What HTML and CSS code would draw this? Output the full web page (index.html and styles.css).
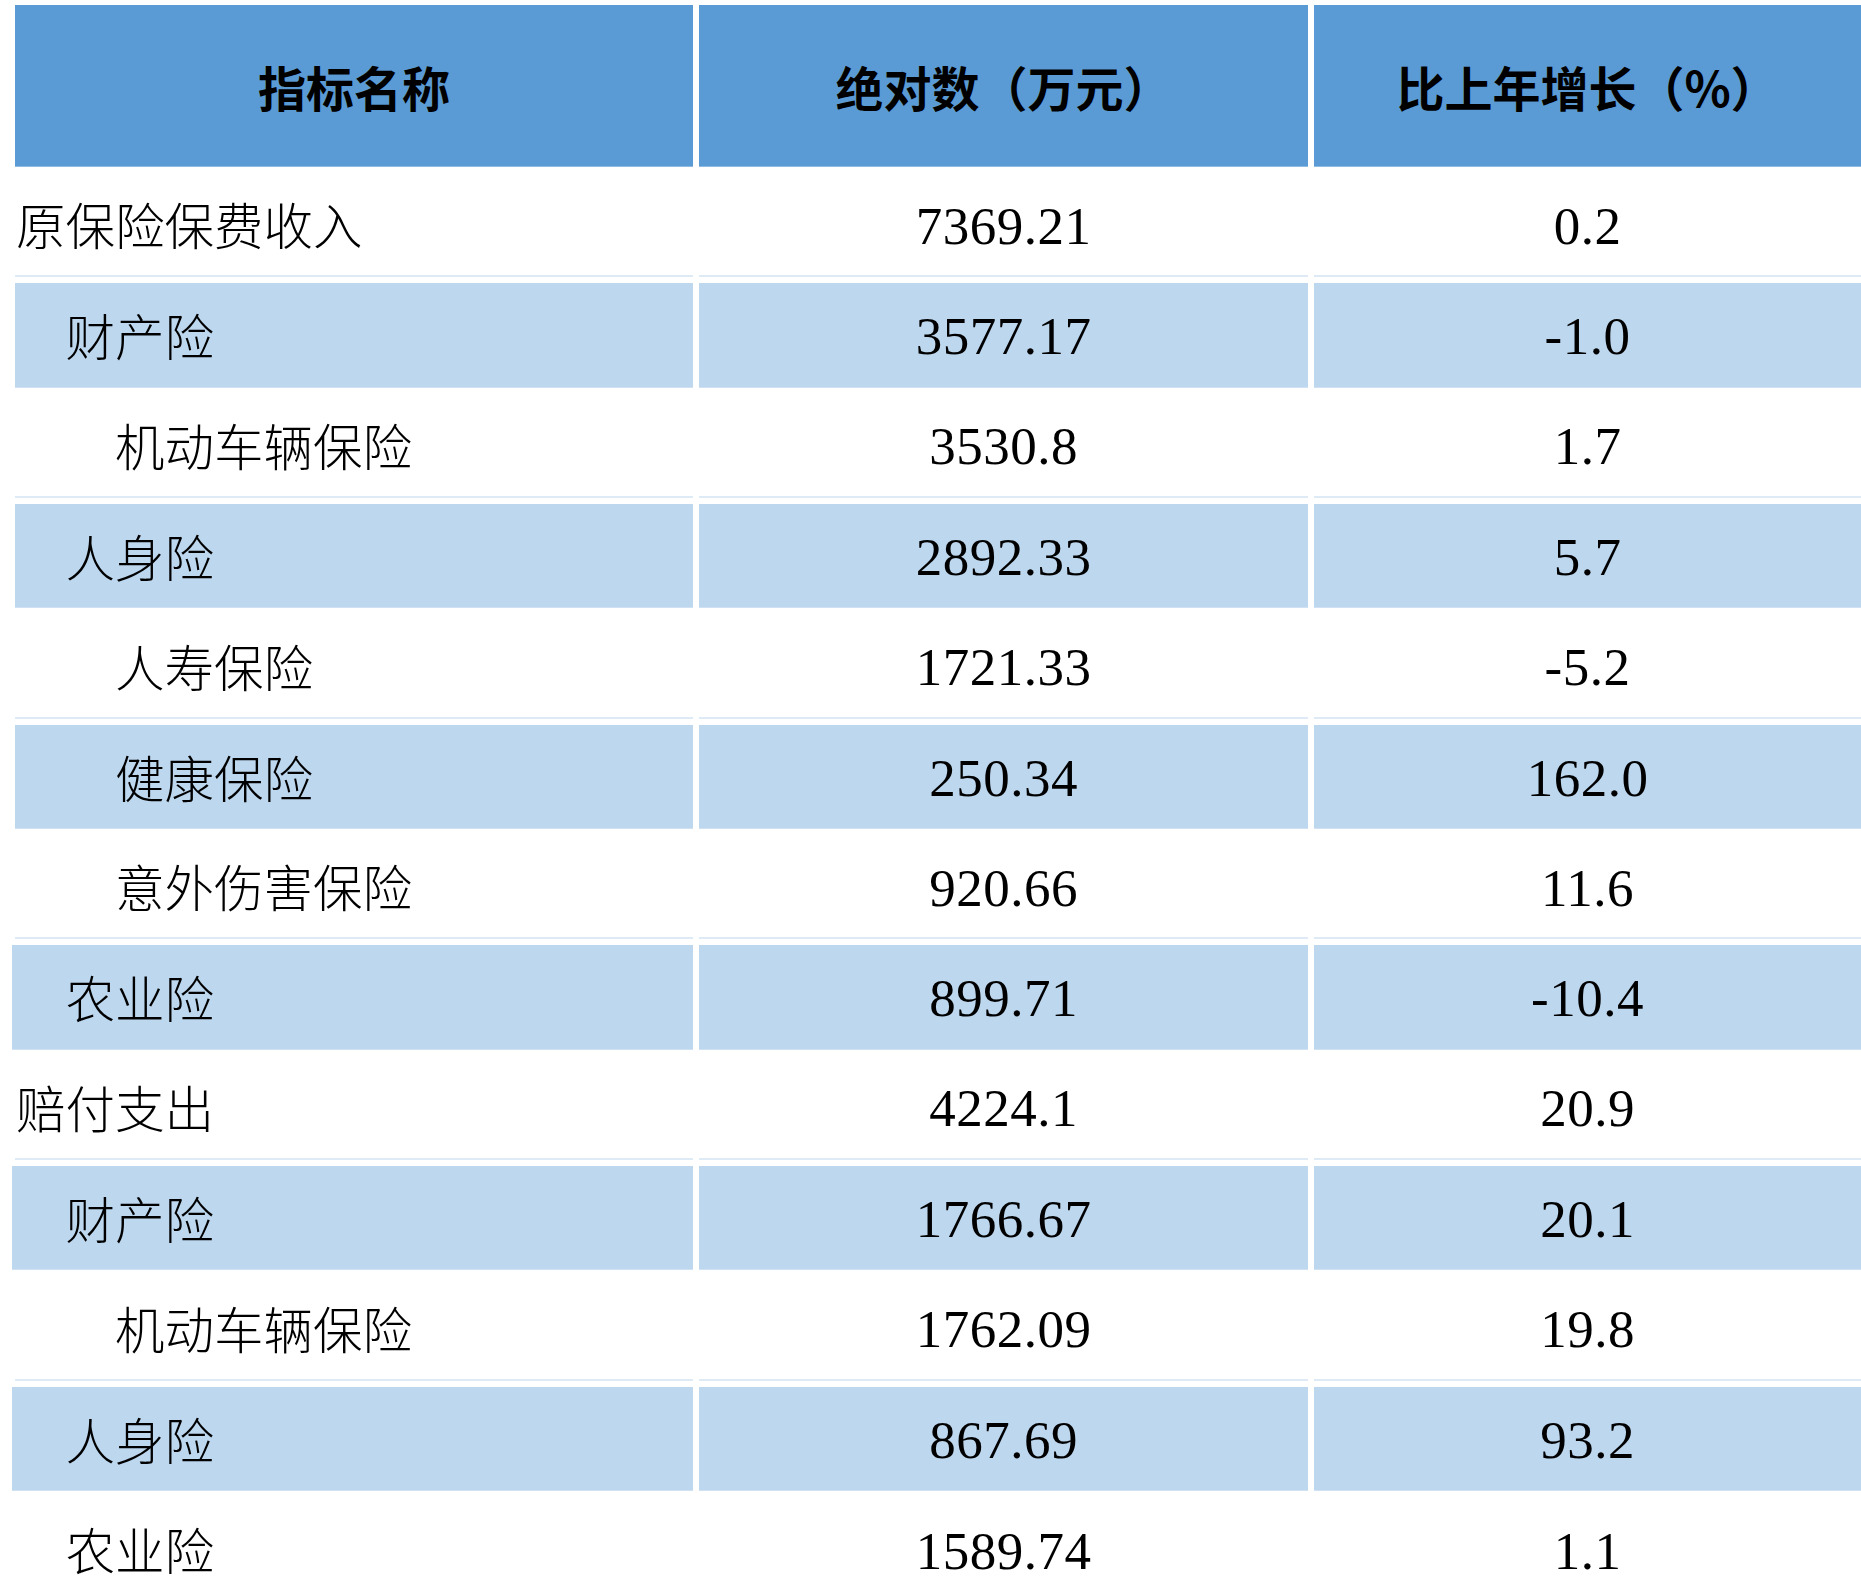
FILE: index.html
```html
<!DOCTYPE html>
<html lang="zh-CN">
<head>
<meta charset="utf-8">
<title>保险统计</title>
<link rel="stylesheet" href="styles.css">
</head>
<body>
<div class="table">
  <div class="row head">
    <div class="cell">指标名称</div>
    <div class="cell">绝对数（万元）</div>
    <div class="cell">比上年增长（%）</div>
  </div>
  <div class="row plain">
    <div class="cell name">原保险保费收入</div>
    <div class="cell num">7369.21</div>
    <div class="cell num">0.2</div>
  </div>
  <div class="row alt">
    <div class="cell name l1">财产险</div>
    <div class="cell num">3577.17</div>
    <div class="cell num">-1.0</div>
  </div>
  <div class="row plain">
    <div class="cell name l2">机动车辆保险</div>
    <div class="cell num">3530.8</div>
    <div class="cell num">1.7</div>
  </div>
  <div class="row alt">
    <div class="cell name l1">人身险</div>
    <div class="cell num">2892.33</div>
    <div class="cell num">5.7</div>
  </div>
  <div class="row plain">
    <div class="cell name l2">人寿保险</div>
    <div class="cell num">1721.33</div>
    <div class="cell num">-5.2</div>
  </div>
  <div class="row alt">
    <div class="cell name l2">健康保险</div>
    <div class="cell num">250.34</div>
    <div class="cell num">162.0</div>
  </div>
  <div class="row plain">
    <div class="cell name l2">意外伤害保险</div>
    <div class="cell num">920.66</div>
    <div class="cell num">11.6</div>
  </div>
  <div class="row alt shift">
    <div class="cell name l1">农业险</div>
    <div class="cell num">899.71</div>
    <div class="cell num">-10.4</div>
  </div>
  <div class="row plain">
    <div class="cell name">赔付支出</div>
    <div class="cell num">4224.1</div>
    <div class="cell num">20.9</div>
  </div>
  <div class="row alt shift">
    <div class="cell name l1">财产险</div>
    <div class="cell num">1766.67</div>
    <div class="cell num">20.1</div>
  </div>
  <div class="row plain">
    <div class="cell name l2">机动车辆保险</div>
    <div class="cell num">1762.09</div>
    <div class="cell num">19.8</div>
  </div>
  <div class="row alt shift">
    <div class="cell name l1">人身险</div>
    <div class="cell num">867.69</div>
    <div class="cell num">93.2</div>
  </div>
  <div class="row plain last">
    <div class="cell name l1">农业险</div>
    <div class="cell num">1589.74</div>
    <div class="cell num">1.1</div>
  </div>
</div>
</body>
</html>
```

FILE: styles.css
```css
html, body {
  margin: 0;
  padding: 0;
  background: #ffffff;
  overflow: hidden;
}

body {
  font-family: "Noto Sans CJK SC", "Noto Sans", sans-serif;
  color: #000000;
}

.table {
  display: flex;
  flex-direction: column;
  gap: 6px;
  padding: 5px 0 0 15px;
}

.row {
  display: grid;
  grid-template-columns: 678px 609px 547px;
  column-gap: 6px;
  height: 104.33px;
}

.row.head {
  height: 162px;
}

.row.shift {
  margin-left: -3px;
  grid-template-columns: 681px 609px 547px;
}

.cell {
  display: flex;
  align-items: center;
  justify-content: center;
  box-sizing: border-box;
  font-size: 49.5px;
  line-height: 1;
  white-space: nowrap;
}

.head .cell {
  background: #5b9bd5;
  font-weight: 700;
  font-size: 48px;
  border-bottom: 1px solid #8fbbe3;
}

.alt .cell {
  background: #bdd7ee;
  border-bottom: 1px solid #cfe1f2;
}

.plain .cell {
  border-bottom: 2px solid #deebf7;
}

.plain.last .cell {
  border-bottom: none;
}

.name {
  justify-content: flex-start;
  padding-left: 1px;
  font-weight: 300;
}

.shift .name {
  padding-left: 4px;
}

.name.l1 {
  padding-left: calc(1px + 1em);
}

.shift .name.l1 {
  padding-left: calc(4px + 1em);
}

.name.l2 {
  padding-left: calc(1px + 2em);
}

.num {
  font-family: "Liberation Serif", "Times New Roman", serif;
  font-size: 53px;
  letter-spacing: 0.5px;
  padding-top: 4px;
}
```
